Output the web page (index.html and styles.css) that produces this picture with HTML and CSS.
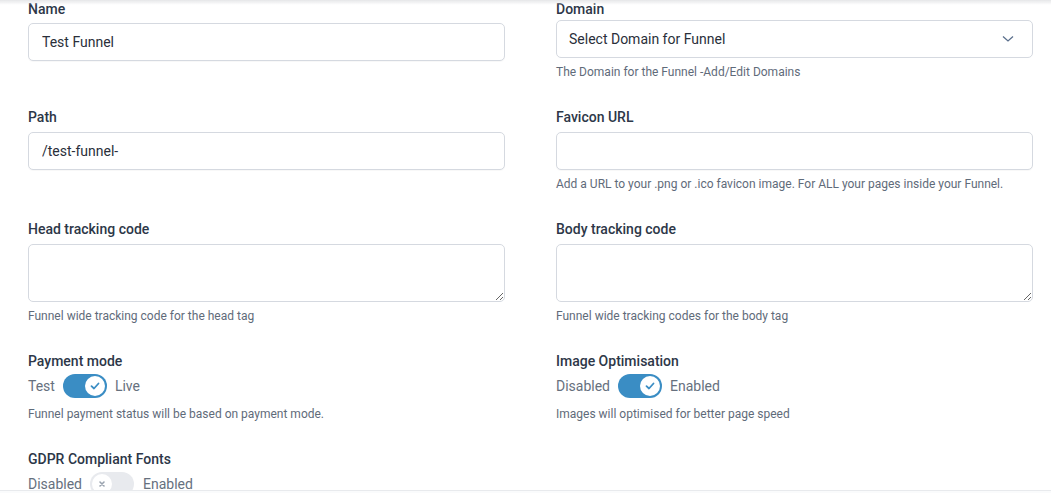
FILE: index.html
```html
<!DOCTYPE html>
<html>
<head>
<meta charset="utf-8">
<link rel="stylesheet" href="styles.css">
</head>
<body>
<div class="top-shadow"></div>
<form class="settings">
  <div class="field">
    <label class="label">Name</label>
    <input class="input input-left" type="text" value="Test Funnel">
  </div>
  <div class="field">
    <label class="label">Domain</label>
    <div class="select">
      <span>Select Domain for Funnel</span>
      <svg class="chevron" width="12" height="8" viewBox="0 0 12 8"><path d="M1 1.5 L6 6 L11 1.5" fill="none" stroke="#5a6f8c" stroke-width="1.3"/></svg>
    </div>
    <p class="help">The Domain for the Funnel -Add/Edit Domains</p>
  </div>

  <div class="field">
    <label class="label">Path</label>
    <input class="input" type="text" value="/test-funnel-">
  </div>
  <div class="field">
    <label class="label">Favicon URL</label>
    <input class="input" type="text" value="">
    <p class="help">Add a URL to your .png or .ico favicon image. For ALL your pages inside your Funnel.</p>
  </div>

  <div class="field">
    <label class="label">Head tracking code</label>
    <textarea class="textarea"></textarea>
    <p class="help">Funnel wide tracking code for the head tag</p>
  </div>
  <div class="field">
    <label class="label">Body tracking code</label>
    <textarea class="textarea"></textarea>
    <p class="help">Funnel wide tracking codes for the body tag</p>
  </div>

  <div class="field">
    <label class="label">Payment mode</label>
    <div class="toggle-row">
      <span>Test</span>
      <span class="switch on"><span class="knob"><svg width="10" height="8" viewBox="0 0 10 8"><path d="M1.5 4.2 L4 6.5 L8.5 1.5" fill="none" stroke="#3a8dc4" stroke-width="1.8" stroke-linecap="round" stroke-linejoin="round"/></svg></span></span>
      <span>Live</span>
    </div>
    <p class="help help-toggle">Funnel payment status will be based on payment mode.</p>
  </div>
  <div class="field">
    <label class="label">Image Optimisation</label>
    <div class="toggle-row">
      <span>Disabled</span>
      <span class="switch on"><span class="knob"><svg width="10" height="8" viewBox="0 0 10 8"><path d="M1.5 4.2 L4 6.5 L8.5 1.5" fill="none" stroke="#3a8dc4" stroke-width="1.8" stroke-linecap="round" stroke-linejoin="round"/></svg></span></span>
      <span>Enabled</span>
    </div>
    <p class="help help-toggle">Images will optimised for better page speed</p>
  </div>

  <div class="field">
    <label class="label">GDPR Compliant Fonts</label>
    <div class="toggle-row">
      <span>Disabled</span>
      <span class="switch off"><span class="knob"><svg width="8" height="8" viewBox="0 0 8 8"><path d="M2 2 L6 6 M6 2 L2 6" fill="none" stroke="#9aa3af" stroke-width="1.6" stroke-linecap="round"/></svg></span></span>
      <span>Enabled</span>
    </div>
  </div>
</form>
<div class="bottom-bar"></div>
</body>
</html>
```

FILE: styles.css
```css
* { box-sizing: border-box; }
html, body {
  margin: 0;
  padding: 0;
  background: #ffffff;
  font-family: Roboto, "Liberation Sans", Arial, sans-serif;
  overflow: hidden;
}
.top-shadow {
  position: fixed;
  top: 0;
  left: 0;
  right: 0;
  height: 5px;
  background: linear-gradient(#e6e7e9, rgba(255,255,255,0));
  z-index: 5;
}
.bottom-bar {
  position: fixed;
  left: 0;
  right: 0;
  bottom: 0;
  height: 3px;
  border-top: 1px solid #e8eaed;
  background: #fafbfc;
  z-index: 5;
}
.settings {
  display: grid;
  grid-template-columns: 1fr 1fr;
  column-gap: 51px;
  row-gap: 28px;
  padding: 0 18px 0 28px;
}
.field {
  display: flex;
  flex-direction: column;
  align-items: stretch;
}
.label {
  font-size: 14px;
  line-height: 18px;
  font-weight: 500;
  color: #2d3748;
}
.input {
  height: 38px;
  margin-top: 6px;
  border: 1px solid #d5d9e0;
  border-radius: 5px;
  padding: 0 13px;
  font-family: inherit;
  font-size: 14px;
  color: #2a2f3a;
  outline: none;
  box-shadow: 0 1px 1px rgba(0,0,0,0.03);
}
.input-left { margin-top: 5px; }
.select {
  height: 38px;
  margin-top: 2px;
  border: 1px solid #d5d9e0;
  border-radius: 5px;
  padding: 0 18px 0 12px;
  display: flex;
  align-items: center;
  justify-content: space-between;
  font-size: 14px;
  color: #2a2f3a;
}
.chevron { display: block; }
.textarea {
  display: block;
  height: 58px;
  margin-top: 6px;
  border: 1px solid #d5d9e0;
  border-radius: 5px;
  resize: vertical;
  font-family: inherit;
  outline: none;
}
.help {
  margin: 6px 0 0 0;
  font-size: 12px;
  line-height: 16px;
  color: #5f6b7a;
}
.help-toggle { margin-top: 8px; }
.toggle-row {
  margin-top: 4px;
  height: 24px;
  display: flex;
  align-items: center;
  gap: 8px;
  font-size: 14px;
  color: #66707e;
}
.switch {
  width: 44px;
  height: 24px;
  border-radius: 12px;
  display: flex;
  align-items: center;
  padding: 2px;
}
.switch.on {
  background: #3a8dc4;
  justify-content: flex-end;
}
.switch.off {
  background: #e8eaee;
  justify-content: flex-start;
  margin-right: 1px;
}
.knob {
  width: 20px;
  height: 20px;
  border-radius: 50%;
  background: #ffffff;
  display: flex;
  align-items: center;
  justify-content: center;
}
.knob svg { display: block; }
```
